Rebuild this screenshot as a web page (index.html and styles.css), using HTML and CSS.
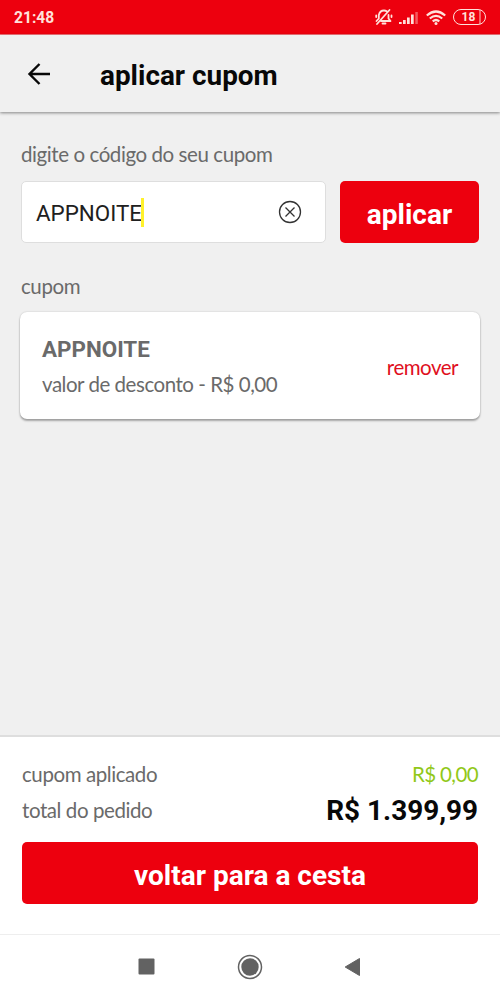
FILE: index.html
```html
<!DOCTYPE html>
<html lang="pt-BR">
<head>
<meta charset="utf-8">
<meta name="viewport" content="width=device-width">
<title>aplicar cupom</title>
<link rel="stylesheet" href="styles.css">
</head>
<body>
<div class="screen">
  <div class="status">
    <span class="time">21:48</span>
    <div class="indicators">
      <svg class="bell" width="18" height="18" viewBox="0 0 18 18" fill="none" stroke="currentColor" stroke-width="1.800" stroke-linecap="round" stroke-linejoin="round">
        <path d="M3.800 10.500V7C4.500 4 6.500 2.500 9 2.500c1 0 2 .3 2.700.8M13.500 7v3.500l2 2.500H6M7.500 15.500h3M2 16L14.500 2M1.500 13l2.300-2.500M1.200 7.500v1.500M16.500 7.500v1.500"/>
      </svg>
      <svg class="signal" width="20" height="14" viewBox="0 0 20 14" fill="currentColor">
        <path d="M0 11h2.700v2H0zM4 9h2.700v4H4zM8 6.500h2.700V13H8zM12 3.500h2.700v9.500H12z"/><path opacity=".4" d="M16.300 1h2.500v12h-2.500z"/>
      </svg>
      <svg class="wifi" width="20" height="16" viewBox="0 0 20 16" fill="none" stroke="currentColor" stroke-width="2.200">
        <path d="M.8 5.500Q10-2.500 19.200 5.500M3.800 8.500Q10 3.200 16.200 8.500M6.700 11.300Q10 8.700 13.300 11.300"/><circle cx="10" cy="13.500" r="1.500" fill="currentColor" stroke="none"/>
      </svg>
      <span class="battery">18</span>
    </div>
  </div>
  <header class="header">
    <svg class="back" width="24" height="24" viewBox="0 0 24 24" fill="none" stroke="currentColor" stroke-width="2.400"><path d="M23 12H2.500M12.500 2L2.500 12l10 10"/></svg>
    <h1 class="title">aplicar cupom</h1>
  </header>
  <main class="content">
    <div class="label">digite o código do seu cupom</div>
    <div class="form">
      <div class="field">
        <span class="value">APPNOITE</span><span class="caret"></span>
        <svg class="clear" width="24" height="24" viewBox="0 0 24 24" fill="none" stroke="currentColor" stroke-width="1.300"><circle cx="12" cy="12" r="10.500"/><path d="M7.500 7.500l9 9M16.500 7.500l-9 9"/></svg>
      </div>
      <button class="button apply">aplicar</button>
    </div>
    <div class="label label-coupon">cupom</div>
    <section class="card">
      <div class="details">
        <div class="code">APPNOITE</div>
        <div class="discount">valor de desconto - R$ 0,00</div>
      </div>
      <a class="remove">remover</a>
    </section>
  </main>
  <footer class="summary">
    <div class="row"><span>cupom aplicado</span><span class="saving">R$ 0,00</span></div>
    <div class="row"><span>total do pedido</span><strong class="price">R$ 1.399,99</strong></div>
    <button class="button return">voltar para a cesta</button>
  </footer>
  <nav class="nav">
    <svg width="17" height="17" viewBox="0 0 17 17"><rect x=".5" y=".5" width="16" height="16" rx="1" fill="currentColor"/></svg>
    <svg width="26" height="26" viewBox="0 0 26 26"><circle cx="13" cy="13" r="11.500" fill="none" stroke="currentColor" stroke-width="1.500"/><circle cx="13" cy="13" r="8.700" fill="currentColor"/></svg>
    <svg width="17" height="20" viewBox="0 0 17 20"><path d="M15.500 1.500v17L1.200 10z" fill="currentColor" stroke="currentColor" stroke-linejoin="round"/></svg>
  </nav>
</div>
</body>
</html>
```
FILE: styles.css
```css
* { box-sizing: border-box; }
body { margin: 0; font-family: Lato, sans-serif; color: #6a6a6a; }
.screen { width: 500px; height: 1000px; display: flex; flex-direction: column; overflow: hidden; background: #f0f0f0; white-space: nowrap; }
.status { flex: none; height: 35px; padding: 0 14px; display: flex; align-items: center; justify-content: space-between; background: #ed000e; border-bottom: 1px solid #f37379; color: #ffe1db; }
.time { font: 700 15.600px/20px Roboto, sans-serif; padding-top: 2px; }
.indicators { display: flex; align-items: center; }
.bell { margin-right: 6px; }
.signal { margin: 2px 7px 0 0; }
.wifi { margin: 1px 7px 0 0; }
.battery { width: 33px; height: 16px; padding-right: 2px; border: 1.500px solid currentColor; border-radius: 8px; background: linear-gradient(90deg, transparent 80%, #f5676a 80%, #f5676a 88%, transparent 88%); font: 700 12px/14px Roboto, sans-serif; text-align: center; }
.header { flex: none; height: 77px; padding: 0 27px; display: flex; align-items: center; background: #f0f0f0; box-shadow: 0 1px 3px rgba(0,0,0,.45); color: #080808; }
.back { margin-right: 49px; }
.title { margin: 5px 0 0; font: 700 27.900px/34px Roboto, sans-serif; }
.content { flex: 1; padding: 29px 20px 0 21px; }
.label, .discount, .remove, .row { font-size: 20.500px; letter-spacing: -.42px; }
.label { height: 26px; line-height: 26px; }
.form { display: flex; gap: 14px; margin-top: 14px; }
.field { width: 305px; height: 62px; padding: 0 23px 0 14px; display: flex; align-items: center; background: #fff; border: 1.500px solid #dedede; border-radius: 5px; color: #202020; }
.value { margin-top: 1px; font: 400 22.400px/30px Roboto, sans-serif; }
.caret { width: 3px; height: 29px; margin-left: -1px; background: #fff12b; }
.clear { margin: 0 0 0 auto; color: #333; }
.button { height: 62px; padding: 5px 0 0; border: 0; border-radius: 5px; background: #ed000e; color: #fff; font: 700 28px/34px Roboto, sans-serif; }
.apply { width: 139px; }
.label-coupon { margin-top: 30px; }
.card { width: 460px; height: 107px; margin: 13px 0 0 -1px; padding: 2px 22px 0; display: flex; align-items: center; justify-content: space-between; background: #fff; border-radius: 7px; box-shadow: 0 0 2px rgba(0,0,0,.2), 0 2px 2px rgba(0,0,0,.3); }
.code { font: 700 22.400px/34px Roboto, sans-serif; }
.discount { line-height: 36px; letter-spacing: -.47px; }
.remove { color: #df101e; letter-spacing: -.5px; }
.summary { flex: none; height: 199px; padding: 19px 22px 0; background: #fff; border-top: 2px solid #dedede; }
.row { display: flex; height: 36px; align-items: center; justify-content: space-between; }
.saving { color: #91c819; letter-spacing: -.6px; }
.price { padding-top: 1px; letter-spacing: 0; color: #080808; font: 700 27.900px/34px Roboto, sans-serif; }
.return { width: 456px; margin-top: 14px; display: block; }
.nav { flex: none; height: 66px; padding: 0 139px 2px 138px; display: flex; align-items: center; justify-content: space-between; background: #fff; border-top: 1px solid #eee; color: #626262; }
```
